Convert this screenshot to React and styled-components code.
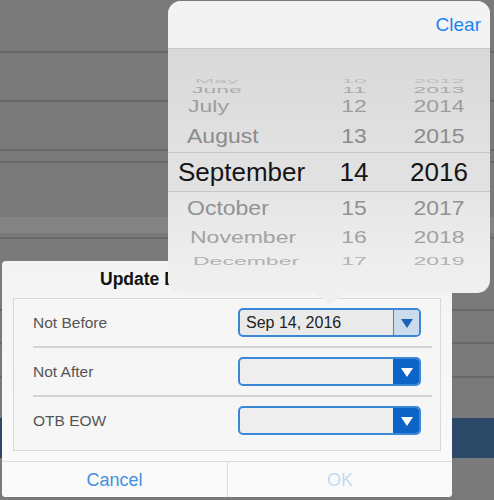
import React from "react";
import styled, { createGlobalStyle } from "styled-components";

const Global = createGlobalStyle`
  html, body { margin: 0; padding: 0; }
  body { font-family: "Liberation Sans", Arial, sans-serif; }
`;

const Page = styled.div`
  position: relative;
  width: 494px;
  height: 500px;
  overflow: hidden;
  background: #7a7a7a;
`;

const BgRow = styled.div`
  box-sizing: border-box;
  height: ${(p) => p.h}px;
  background: ${(p) => p.bg || "transparent"};
  border-bottom: ${(p) => (p.line ? "2px solid #686868" : "none")};
`;

/* ---------- Dialog ---------- */
const Dialog = styled.div`
  position: absolute;
  left: 2px;
  top: 261px;
  width: 450px;
  height: 236px;
  border-radius: 4px;
  background: linear-gradient(180deg, #f3f3f3 0%, #f8f8f8 60%, #fbfbfb 100%);
  display: flex;
  flex-direction: column;
  overflow: hidden;
`;

const Title = styled.div`
  height: 37px;
  display: flex;
  align-items: center;
  padding-left: 98px;
  font-size: 17.5px;
  font-weight: bold;
  color: #111;
  white-space: nowrap;
`;

const FormBox = styled.div`
  box-sizing: border-box;
  margin: 0 11px;
  height: 153px;
  border: 1px solid #d9d9d9;
  background: #f6f6f6;
  padding: 0 8px 0 19px;
  display: flex;
  flex-direction: column;
`;

const FieldRow = styled.div`
  display: grid;
  grid-template-columns: 1fr 183px;
  align-items: center;
  padding: 9px 11px 9px 0;
  border-bottom: ${(p) => (p.last ? "none" : "2px solid #d2d2d2")};
`;

const Label = styled.div`
  font-size: 15.5px;
  color: #555;
`;

const Select = styled.div`
  box-sizing: border-box;
  height: 29px;
  border: 2px solid #3a87d8;
  border-radius: 5px;
  background: ${(p) => (p.filled ? "#eaeaea" : "#eeeeee")};
  display: flex;
  overflow: hidden;
`;

const SelectValue = styled.div`
  flex: 1;
  display: flex;
  align-items: center;
  padding-left: 6px;
  font-size: 16px;
  color: #222;
`;

const SelectButton = styled.div`
  width: 25px;
  display: flex;
  align-items: center;
  justify-content: center;
  background: ${(p) => (p.active ? "#cbdbeb" : "#0b64c6")};
  border-left: 1px solid ${(p) => (p.active ? "#3a87d8" : "#0b64c6")};
`;

const Triangle = styled.span`
  width: 0;
  height: 0;
  border-left: 6px solid transparent;
  border-right: 6px solid transparent;
  border-top: 9px solid ${(p) => (p.active ? "#1c63b6" : "#ffffff")};
  margin-top: 1px;
`;

const Footer = styled.div`
  margin-top: 10px;
  flex: 1;
  display: grid;
  grid-template-columns: 226px 1fr;
  border-top: 1px solid #dcdcdc;
  background: #fafafa;
`;

const FooterButton = styled.div`
  display: flex;
  align-items: center;
  justify-content: center;
  padding-top: 2px;
  font-size: 18px;
  color: ${(p) => (p.disabled ? "#c3daf1" : "#3f91e0")};
  border-right: ${(p) => (p.divider ? "1px solid #dcdcdc" : "none")};
`;

/* ---------- Popover ---------- */
const Popover = styled.div`
  position: absolute;
  left: 168px;
  top: 1px;
  width: 322px;
  height: 292px;
  border-radius: 13px;
  display: flex;
  flex-direction: column;
  background: linear-gradient(180deg, #d9d9d9 18%, #e2e2e2 55%, #eeeeee 90%, #f0f0f0 100%);
`;

const Arrow = styled.div`
  position: absolute;
  left: 147px;
  bottom: -11px;
  width: 0;
  height: 0;
  border-left: 15px solid transparent;
  border-right: 15px solid transparent;
  border-top: 11px solid #efefef;
`;

const PopHeader = styled.div`
  box-sizing: border-box;
  height: 48px;
  background: #f3f3f3;
  border-radius: 13px 13px 0 0;
  border-bottom: 1px solid #c9c9c9;
  display: flex;
  align-items: center;
  justify-content: flex-end;
  padding-right: 9px;
`;

const ClearButton = styled.span`
  font-size: 19px;
  color: #1a83f2;
`;

const Wheel = styled.div`
  padding-top: 21px;
  display: flex;
  flex-direction: column;
  overflow: hidden;
`;

const WheelRow = styled.div`
  box-sizing: border-box;
  height: ${(p) => p.h}px;
  display: grid;
  grid-template-columns: 156px 60px 25px 60px;
  background: ${(p) => (p.selected ? "#e1e1e1" : "transparent")};
  border-top: ${(p) => (p.selected ? "1px solid #c6c6c6" : "none")};
  border-bottom: ${(p) => (p.selected ? "1px solid #c6c6c6" : "none")};
  color: ${(p) => p.color};
  font-size: ${(p) => (p.selected ? 26 : 23)}px;
`;

const Cell = styled.div`
  display: flex;
  align-items: center;
  justify-content: ${(p) => (p.left ? "flex-start" : "center")};
  padding-left: ${(p) => p.inset || 0}px;
  white-space: nowrap;
  grid-column: ${(p) => p.col};
`;

const CellText = styled.span`
  display: inline-block;
  line-height: 1;
  transform: scaleY(${(p) => p.s});
`;

const wheelRows = [
  { m: "May", d: "10", y: "2012", h: 8, s: 0.2, color: "#bdbdbd", inset: 27 },
  { m: "June", d: "11", y: "2013", h: 14, s: 0.4, color: "#ababab", inset: 24 },
  { m: "July", d: "12", y: "2014", h: 28, s: 0.72, color: "#9d9d9d", inset: 20 },
  { m: "August", d: "13", y: "2015", h: 32, s: 0.87, color: "#8c8c8c", inset: 19 },
  { m: "September", d: "14", y: "2016", h: 40, s: 1, color: "#151515", inset: 10, selected: true },
  { m: "October", d: "15", y: "2017", h: 32, s: 0.9, color: "#929292", inset: 19 },
  { m: "November", d: "16", y: "2018", h: 26, s: 0.7, color: "#a2a2a2", inset: 22 },
  { m: "December", d: "17", y: "2019", h: 15, s: 0.48, color: "#b2b2b2", inset: 25 },
  { m: "January", d: "18", y: "2020", h: 7, s: 0.15, color: "#cacaca", inset: 27 },
];

const bgRows = [
  { h: 53, line: true },
  { h: 49, line: true },
  { h: 49, line: true },
  { h: 12, line: true },
  { h: 54 },
  { h: 16, bg: "#848484" },
  { h: 6, line: true },
  { h: 72, line: true },
  { h: 33, line: true },
  { h: 34, line: true },
  { h: 40 },
  { h: 40, bg: "#2c4a68" },
  { h: 42 },
];

const fields = [
  { label: "Not Before", value: "Sep 14, 2016", active: true },
  { label: "Not After", value: "" },
  { label: "OTB EOW", value: "", last: true },
];

export default function App() {
  return (
    <>
      <Global />
      <Page>
        {bgRows.map((r, i) => (
          <BgRow key={i} h={r.h} line={r.line} bg={r.bg} />
        ))}

        <Dialog>
          <Title>Update Delivery Dates</Title>
          <FormBox>
            {fields.map((f) => (
              <FieldRow key={f.label} last={f.last}>
                <Label>{f.label}</Label>
                <Select filled={f.active}>
                  <SelectValue>{f.value}</SelectValue>
                  <SelectButton active={f.active}>
                    <Triangle active={f.active} />
                  </SelectButton>
                </Select>
              </FieldRow>
            ))}
          </FormBox>
          <Footer>
            <FooterButton divider>Cancel</FooterButton>
            <FooterButton disabled>OK</FooterButton>
          </Footer>
        </Dialog>

        <Popover>
          <PopHeader>
            <ClearButton>Clear</ClearButton>
          </PopHeader>
          <Wheel>
            {wheelRows.map((r) => (
              <WheelRow key={r.m} h={r.h} color={r.color} selected={r.selected}>
                <Cell left inset={r.inset} col="1">
                  <CellText s={r.s}>{r.m}</CellText>
                </Cell>
                <Cell col="2">
                  <CellText s={r.s}>{r.d}</CellText>
                </Cell>
                <Cell col="4">
                  <CellText s={r.s}>{r.y}</CellText>
                </Cell>
              </WheelRow>
            ))}
          </Wheel>
          <Arrow />
        </Popover>
      </Page>
    </>
  );
}
